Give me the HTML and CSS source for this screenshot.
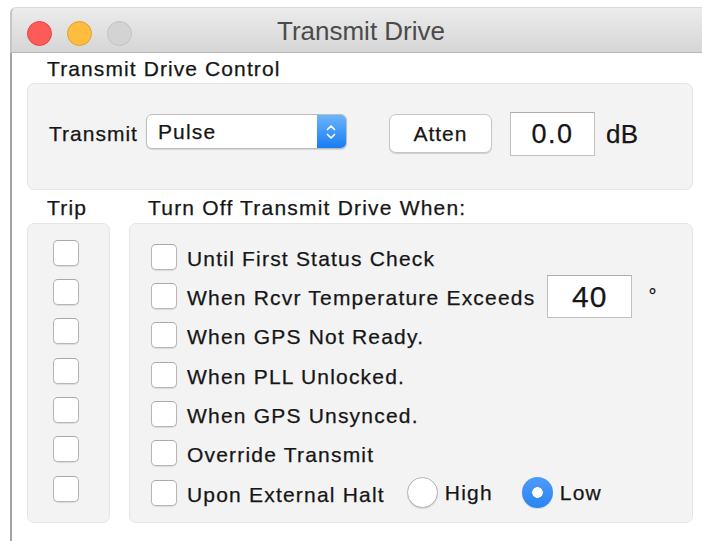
FILE: index.html
```html
<!DOCTYPE html>
<html lang="en">
<head>
<meta charset="utf-8">
<title>Transmit Drive</title>
<link rel="stylesheet" href="styles.css">
</head>
<body>
<div class="window">
  <div class="titlebar">
    <div class="lights">
      <span class="light close"></span>
      <span class="light minimize"></span>
      <span class="light zoom"></span>
    </div>
    <div class="title">Transmit Drive</div>
    <div></div>
  </div>

  <div class="content">
    <div class="section-label">Transmit Drive Control</div>
    <div class="group control-group">
      <div class="control-row">
        <span class="text">Transmit</span>
        <div class="popup">
          <span class="popup-value">Pulse</span>
          <span class="popup-arrows">
            <svg width="12" height="22" viewBox="0 0 12 22">
              <path d="M2.5 8.5 L6 5 L9.5 8.5" fill="none" stroke="#fff" stroke-width="1.7" stroke-linecap="round" stroke-linejoin="round"/>
              <path d="M2.5 13.5 L6 17 L9.5 13.5" fill="none" stroke="#fff" stroke-width="1.7" stroke-linecap="round" stroke-linejoin="round"/>
            </svg>
          </span>
        </div>
        <button class="push-button">Atten</button>
        <div class="field atten-field">0.0</div>
        <span class="unit">dB</span>
      </div>
    </div>

    <div class="lower">
      <div class="column-label trip-label">Trip</div>
      <div class="column-label conditions-label">Turn Off Transmit Drive When:</div>

      <div class="group trip-group">
        <div class="trip-row"><span class="checkbox"></span></div>
        <div class="trip-row"><span class="checkbox"></span></div>
        <div class="trip-row"><span class="checkbox"></span></div>
        <div class="trip-row"><span class="checkbox"></span></div>
        <div class="trip-row"><span class="checkbox"></span></div>
        <div class="trip-row"><span class="checkbox"></span></div>
        <div class="trip-row"><span class="checkbox"></span></div>
      </div>

      <div class="group conditions-group">
        <div class="cond-row"><span class="checkbox"></span><span class="text">Until First Status Check</span></div>
        <div class="cond-row">
          <span class="checkbox"></span><span class="text">When Rcvr Temperature Exceeds</span>
          <div class="field temp-field">40</div>
          <span class="text degree">°</span>
        </div>
        <div class="cond-row"><span class="checkbox"></span><span class="text">When GPS Not Ready.</span></div>
        <div class="cond-row"><span class="checkbox"></span><span class="text">When PLL Unlocked.</span></div>
        <div class="cond-row"><span class="checkbox"></span><span class="text">When GPS Unsynced.</span></div>
        <div class="cond-row"><span class="checkbox"></span><span class="text">Override Transmit</span></div>
        <div class="cond-row">
          <span class="checkbox"></span><span class="text">Upon External Halt</span>
          <span class="radio high-radio"></span><span class="text radio-text">High</span>
          <span class="radio selected low-radio"></span><span class="text radio-text">Low</span>
        </div>
      </div>
    </div>
  </div>
</div>
</body>
</html>
```
FILE: styles.css
```css
html, body {
  margin: 0;
  height: 100%;
}

body {
  background: #ffffff;
  overflow: hidden;
  padding: 7px 0 0 10px;
  box-sizing: border-box;
  font-family: "Liberation Sans", Arial, sans-serif;
  color: #161616;
}

.window {
  width: 700px;
  height: 534px;
  display: flex;
  flex-direction: column;
}

/* title bar */
.titlebar {
  height: 44px;
  display: grid;
  grid-template-columns: 1fr auto 1fr;
  background: linear-gradient(#ececec, #d6d6d6);
  border-top: 1px solid #d9d9d9;
  border-bottom: 1px solid #b4b4b4;
  border-left: 2px solid #c6c6c6;
  border-top-left-radius: 6px;
}

.lights {
  display: flex;
  gap: 15px;
  padding: 13px 0 0 15px;
  align-self: start;
}

.light {
  width: 25px;
  height: 25px;
  border-radius: 50%;
  box-sizing: border-box;
}

.close { background: #fc5b57; border: 1px solid #e5453f; }
.minimize { background: #fdbd3e; border: 1px solid #e0a12a; }
.zoom { background: #d3d3d3; border: 1px solid #c2c2c2; }

.title {
  font-size: 26px;
  line-height: 41px;
  padding-top: 3px;
  color: #4b4b4b;
  white-space: nowrap;
}

/* window body */
.content {
  flex: 1;
  border-left: 2px solid #a4a4a4;
  font-size: 21px;
  letter-spacing: 1.2px;
  -webkit-text-stroke: 0.25px currentColor;
}

.text {
  white-space: nowrap;
  line-height: 24px;
}

.section-label {
  line-height: 24px;
  margin-top: 4px;
  padding-left: 35px;
  letter-spacing: 1.1px;
}

.group {
  background: #f3f3f3;
  border: 1px solid #e6e6e6;
  border-radius: 7px;
  box-sizing: border-box;
}

.control-group {
  width: 666px;
  height: 107px;
  margin: 2px 0 0 15px;
  padding: 28px 0 0 21px;
}

.control-row {
  display: flex;
  align-items: center;
  height: 44px;
}

.control-row > .text {
  letter-spacing: 1px;
}

.popup {
  width: 201px;
  height: 35px;
  margin: 0 0 5px 8px;
  display: flex;
  align-items: stretch;
  box-sizing: border-box;
  background: #fff;
  border: 1px solid #bcbcbc;
  border-radius: 6px;
  box-shadow: 0 1px 1px rgba(0, 0, 0, 0.12);
  overflow: hidden;
}

.popup-value {
  flex: 1;
  line-height: 33px;
  padding-left: 11px;
}

.popup-arrows {
  width: 29px;
  display: flex;
  align-items: center;
  justify-content: center;
  background: linear-gradient(#6db4fb, #187cf4);
}

.push-button {
  width: 103px;
  height: 39px;
  margin: 0 0 1px 42px;
  padding: 0;
  font: inherit;
  letter-spacing: 1px;
  color: #161616;
  -webkit-text-stroke: 0.25px currentColor;
  background: #fff;
  border: 1px solid #c6c6c6;
  border-radius: 7px;
  box-shadow: 0 1px 1px rgba(0, 0, 0, 0.15);
}

.field {
  background: #fff;
  border: 1px solid #c0c0c0;
  border-top-color: #adadad;
  box-sizing: border-box;
  text-align: center;
}

.atten-field {
  width: 85px;
  height: 44px;
  margin-left: 18px;
  font-size: 27px;
  line-height: 42px;
  letter-spacing: 1.5px;
}

.unit {
  margin-left: 11px;
  font-size: 26px;
  letter-spacing: 0.5px;
}

/* trip / condition columns */
.lower {
  display: grid;
  grid-template-columns: 83px 564px;
  column-gap: 19px;
  row-gap: 3px;
  margin: 6px 0 0 15px;
}

.column-label {
  line-height: 24px;
  white-space: nowrap;
}

.trip-label { padding-left: 20px; }
.conditions-label { padding-left: 19px; }

.trip-group {
  height: 300px;
  padding-top: 9px;
}

.conditions-group {
  height: 300px;
  padding: 13px 0 0 21px;
}

.trip-row,
.cond-row {
  height: 39.33px;
  display: flex;
  align-items: center;
}

.trip-row {
  padding-left: 25px;
}

.checkbox {
  width: 26px;
  height: 26px;
  flex: none;
  box-sizing: border-box;
  background: #fff;
  border: 1px solid #b6b6b6;
  border-top-color: #a9a9a9;
  border-radius: 5px;
  box-shadow: 0 1px 1px rgba(0, 0, 0, 0.1);
}

.cond-row .checkbox + .text {
  margin: 4px 0 0 10px;
}

.temp-field {
  width: 85px;
  height: 43px;
  margin-left: 12px;
  font-size: 30px;
  line-height: 41px;
}

.degree {
  margin-left: 16px;
  font-size: 20px;
}

.radio {
  width: 31px;
  height: 31px;
  flex: none;
  border-radius: 50%;
  box-sizing: border-box;
  background: #fff;
  border: 1px solid #b4b4b4;
  box-shadow: 0 1px 1px rgba(0, 0, 0, 0.12);
}

.high-radio { margin-left: 22px; }
.low-radio { margin-left: 29px; }

.radio.selected {
  border: none;
  background: radial-gradient(circle, #ffffff 0 5px, transparent 5.6px), linear-gradient(#4d9bf8, #2a84f3);
}

.radio-text {
  margin: 0 0 0 7px;
}
```
